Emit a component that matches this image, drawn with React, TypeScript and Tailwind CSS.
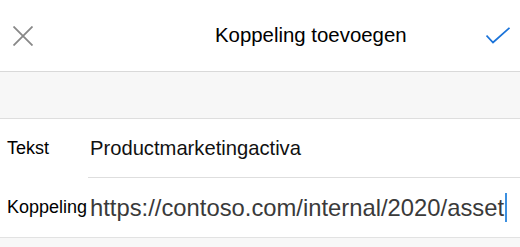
export default function App() {
  return (
    <div className="w-[520px] h-[247px] bg-[#f7f7f7] overflow-hidden font-['Liberation_Sans',Arial,sans-serif]">
      <header className="h-[72px] bg-white border-b border-[#d9d9d9] flex items-center">
        <button className="ml-[13px] w-[20px] h-[20px] text-[#888]" aria-label="Sluiten">
          <svg viewBox="0 0 20 20" className="w-[20px] h-[20px]" fill="none" stroke="currentColor" strokeWidth={1.8}>
            <path d="M0.5 0.5 L19.5 19.5 M19.5 0.5 L0.5 19.5" />
          </svg>
        </button>
        <h1 className="ml-[182px] text-[20.4px] text-black leading-none">Koppeling toevoegen</h1>
        <button className="ml-auto mr-[10px] w-[24px] h-[18px] text-[#1a73d9]" aria-label="Gereed">
          <svg viewBox="0 0 24 18" className="w-[24px] h-[18px]" fill="none" stroke="currentColor" strokeWidth={1.8}>
            <path d="M0.5 8.5 L7 15.5 L23.5 0.8" />
          </svg>
        </button>
      </header>

      <div className="h-[47px] bg-[#f7f7f7] border-b border-[#dedede]" />

      <section className="bg-white border-b border-[#e2e2e2]">
        <div className="flex h-[59px]">
          <div className="w-[88px] pl-[7px] flex items-center text-[18px] text-black">Tekst</div>
          <div className="flex-1 border-b border-[#dedede] pl-[2px] flex items-center text-[20.2px] text-[#111]">
            Productmarketingactiva
          </div>
        </div>
        <div className="flex h-[59px]">
          <div className="w-[88px] pl-[7px] flex items-center text-[18px] text-black whitespace-nowrap">Koppeling</div>
          <div className="flex-1 flex items-center pl-[2px] text-[23.8px] text-[#3a3a3a] whitespace-nowrap">
            https://contoso.com/internal/2020/asset
            <span className="ml-[1px] w-[2px] h-[29px] bg-[#3b8fe0]" />
          </div>
        </div>
      </section>
    </div>
  )
}
